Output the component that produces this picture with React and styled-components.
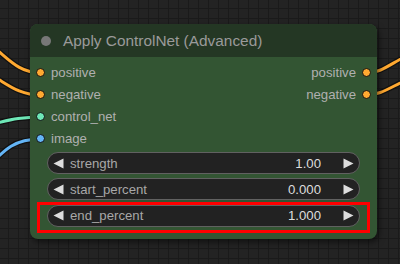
import React from "react";
import styled, { createGlobalStyle } from "styled-components";

const GlobalStyle = createGlobalStyle`
  html, body {
    margin: 0;
    padding: 0;
    background: #222;
    overflow: hidden;
  }
`;

const Canvas = styled.div`
  position: relative;
  width: 400px;
  height: 264px;
  overflow: hidden;
  background-color: #232323;
  background-image:
    linear-gradient(to right, #1a1a1a 1px, transparent 1px),
    linear-gradient(to bottom, #1a1a1a 1px, transparent 1px);
  background-size: 10px 10px;
  background-position: 8px 8px;
  font-family: "Liberation Sans", Arial, sans-serif;
`;

const WireLayer = styled.svg`
  position: absolute;
  inset: 0;
  width: 400px;
  height: 264px;
`;

const Node = styled.div`
  position: absolute;
  left: 30px;
  top: 24px;
  width: 347px;
  border-radius: 8px;
  background: #335533;
  box-shadow: 2px 3px 6px rgba(0, 0, 0, 0.55);
  display: flex;
  flex-direction: column;
`;

const TitleBar = styled.div`
  height: 33px;
  display: flex;
  align-items: center;
  padding-left: 11px;
  background: #243724;
  border-radius: 8px 8px 0 0;
`;

const TitleDot = styled.span`
  width: 10px;
  height: 10px;
  border-radius: 50%;
  background: #777;
`;

const TitleText = styled.span`
  margin-left: 12px;
  font-size: 15.4px;
  color: #9a9a9a;
  white-space: nowrap;
`;

const Body = styled.div`
  padding: 5px 0 12px;
  display: flex;
  flex-direction: column;
`;

const SlotRow = styled.div`
  height: 22px;
  display: flex;
  align-items: center;
  justify-content: space-between;
`;

const Slot = styled.div`
  display: flex;
  align-items: center;
  gap: 6px;
  padding: ${(p) => (p.$out ? "0 6px 0 0" : "0 0 0 6px")};
  flex-direction: ${(p) => (p.$out ? "row-reverse" : "row")};
`;

const SlotDot = styled.span`
  width: 9px;
  height: 9px;
  box-sizing: border-box;
  border-radius: 50%;
  background: ${(p) => p.$color};
  border: 1px solid #111;
`;

const SlotLabel = styled.span`
  font-size: 13.2px;
  color: #b0b0b0;
  line-height: 1;
`;

const Widgets = styled.div`
  margin: 2px 17px 0;
  display: flex;
  flex-direction: column;
  gap: 4.4px;
`;

const WidgetWrap = styled.div`
  position: relative;
`;

const Widget = styled.div`
  height: 22px;
  box-sizing: border-box;
  border-radius: 11px;
  background: #222;
  border: 1px solid #616161;
  display: flex;
  align-items: center;
  padding: 0 5px;
  font-size: 13.2px;
`;

const WidgetLabel = styled.span`
  margin-left: 6px;
  color: #a8a8a8;
  flex: 1;
`;

const WidgetValue = styled.span`
  color: #dddddd;
  margin-right: 22px;
`;

const Arrow = styled.svg`
  width: 11px;
  height: 11px;
  display: block;
`;

const Highlight = styled.div`
  position: absolute;
  top: -3px;
  bottom: -6px;
  left: -10px;
  right: -10px;
  border: 3px solid #ff0000;
  pointer-events: none;
`;

const LeftArrow = () => (
  <Arrow viewBox="0 0 11 11">
    <polygon points="0.5,5.5 10.5,0.5 10.5,10.5" fill="#dddddd" />
  </Arrow>
);

const RightArrow = () => (
  <Arrow viewBox="0 0 11 11">
    <polygon points="10.5,5.5 0.5,0.5 0.5,10.5" fill="#dddddd" />
  </Arrow>
);

const Wire = ({ d, color }) => (
  <g fill="none" strokeLinecap="round">
    <path d={d} stroke="#111" strokeWidth="5.5" />
    <path d={d} stroke={color} strokeWidth="3" />
  </g>
);

const ORANGE = "#ffa931";
const TEAL = "#6ee7b7";
const BLUE = "#64b5f6";

const inputs = [
  { name: "positive", color: ORANGE, out: "positive" },
  { name: "negative", color: ORANGE, out: "negative" },
  { name: "control_net", color: TEAL },
  { name: "image", color: BLUE },
];

const widgets = [
  { name: "strength", value: "1.00" },
  { name: "start_percent", value: "0.000" },
  { name: "end_percent", value: "1.000", highlight: true },
];

export default function App() {
  return (
    <>
      <GlobalStyle />
      <Canvas>
        <WireLayer viewBox="0 0 400 264">
          <Wire d="M -50 28 C 0 35, 5 73, 41 73" color={ORANGE} />
          <Wire d="M -50 62 C 0 68, 5 95, 41 95" color={ORANGE} />
          <Wire d="M -50 130 C 0 126, 5 117, 41 117" color={TEAL} />
          <Wire d="M -30 185 C 0 158, 5 139, 41 139" color={BLUE} />
          <Wire d="M 366 73 C 385 73, 392 60, 430 45" color={ORANGE} />
          <Wire d="M 366 95 C 385 95, 392 84, 430 70" color={ORANGE} />
        </WireLayer>
        <Node>
          <TitleBar>
            <TitleDot />
            <TitleText>Apply ControlNet (Advanced)</TitleText>
          </TitleBar>
          <Body>
            {inputs.map((s) => (
              <SlotRow key={s.name}>
                <Slot>
                  <SlotDot $color={s.color} />
                  <SlotLabel>{s.name}</SlotLabel>
                </Slot>
                {s.out && (
                  <Slot $out>
                    <SlotDot $color={ORANGE} />
                    <SlotLabel>{s.out}</SlotLabel>
                  </Slot>
                )}
              </SlotRow>
            ))}
            <Widgets>
              {widgets.map((w) => (
                <WidgetWrap key={w.name}>
                  <Widget>
                    <LeftArrow />
                    <WidgetLabel>{w.name}</WidgetLabel>
                    <WidgetValue>{w.value}</WidgetValue>
                    <RightArrow />
                  </Widget>
                  {w.highlight && <Highlight />}
                </WidgetWrap>
              ))}
            </Widgets>
          </Body>
        </Node>
      </Canvas>
    </>
  );
}
